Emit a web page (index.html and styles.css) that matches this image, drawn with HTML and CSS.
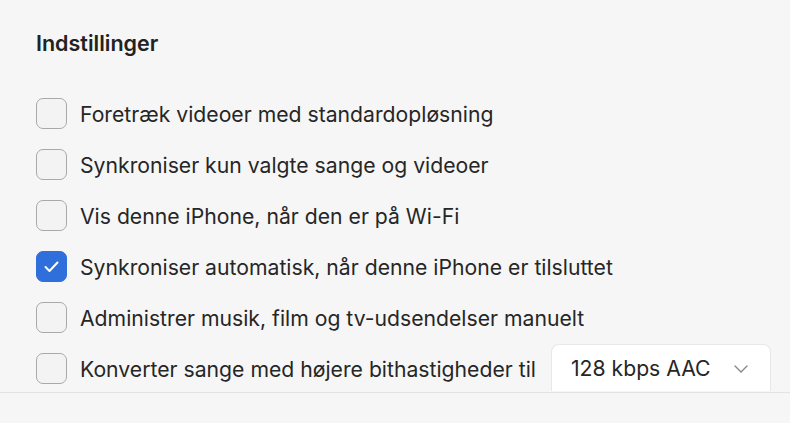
FILE: index.html
```
<!DOCTYPE html>
<html>
<head>
<meta charset="utf-8">
<link rel="stylesheet" href="styles.css">
</head>
<body>
<div class="panel">
  <h2 class="title">Indstillinger</h2>
  <div class="options">
    <label class="row"><span class="box"></span><span class="text">Foretræk videoer med standardopløsning</span></label>
    <label class="row"><span class="box"></span><span class="text">Synkroniser kun valgte sange og videoer</span></label>
    <label class="row"><span class="box"></span><span class="text">Vis denne iPhone, når den er på Wi-Fi</span></label>
    <label class="row"><span class="box checked"><svg viewBox="0 0 31 31" width="31" height="31"><path d="M9.5 16 L13.5 20 L21.5 11.5" fill="none" stroke="#fff" stroke-width="2" stroke-linecap="round" stroke-linejoin="round"/></svg></span><span class="text">Synkroniser automatisk, når denne iPhone er tilsluttet</span></label>
    <label class="row"><span class="box"></span><span class="text">Administrer musik, film og tv-udsendelser manuelt</span></label>
    <div class="row last"><span class="box"></span><span class="text">Konverter sange med højere bithastigheder til</span>
      <div class="select"><span>128 kbps AAC</span><svg class="chev" viewBox="0 0 14 8" width="14" height="8"><path d="M1 1 L7 7 L13 1" fill="none" stroke="#888" stroke-width="1.4" stroke-linecap="round" stroke-linejoin="round"/></svg></div>
    </div>
  </div>
</div>
<div class="footer"></div>
</body>
</html>
```
FILE: styles.css
```
html, body { margin: 0; padding: 0; }
body {
  width: 790px; height: 423px; overflow: hidden;
  background: #f6f6f6;
  font-family: "Inter", "Liberation Sans", sans-serif;
  color: #222;
}
.panel { padding: 30px 0 0 36px; height: 393px; box-sizing: border-box; border-bottom: 1px solid #e3e3e3; overflow: hidden; }
.title { margin: 0; font-size: 21.5px; font-weight: 600; line-height: 26px; color: #222; }
.options { margin-top: 42px; display: flex; flex-direction: column; gap: 20px; }
.row { display: flex; align-items: center; height: 31px; }
.box { width: 31px; height: 31px; box-sizing: border-box; border: 1.5px solid #a9a9a9; border-radius: 7px; background: #f3f3f3; flex: none; }
.box.checked { background: #2f6fdb; border-color: #2f6fdb; }
.box.checked svg { display: block; margin: -1.5px; }
.text { margin-left: 13px; font-size: 21.2px; color: #262626; white-space: nowrap; }
.select { margin-left: 15px; width: 220px; height: 47px; box-sizing: border-box; align-self: flex-end; margin-bottom: -7px; background: #fff; border: 1px solid #e8e8e8; border-bottom: none; border-radius: 8px 8px 0 0; display: flex; align-items: center; padding: 0 22px 0 19px; justify-content: space-between; font-size: 21.2px; color: #262626; flex: none; }
.chev { margin-top: 2px; }
.footer { height: 30px; background: #f6f6f6; }
```
